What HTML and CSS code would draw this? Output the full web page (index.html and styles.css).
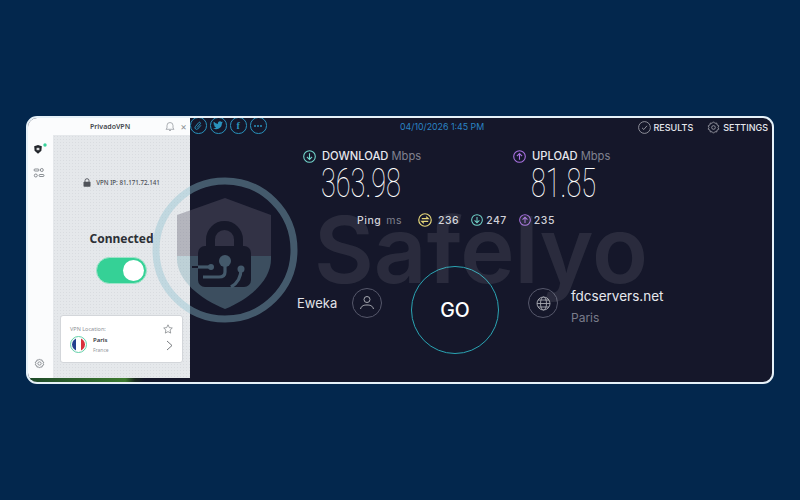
FILE: index.html
```html
<!DOCTYPE html>
<html lang="en">
<head>
    <meta charset="UTF-8">
    <title>PrivadoVPN speed test</title>
    <link rel="stylesheet" href="styles.css">
</head>
<body>
    <div class="frame">
        <div class="vpn">
            <div class="vpn-body">
                <div class="rail">
                    <svg class="rail-shield" width="16" height="14" viewBox="0 0 16 14">
                        <path d="M3.200 4.200 L7 3 L10.800 4.200 L10.400 8.800 L7 11.800 L3.600 8.800 Z" fill="#23262b"/>
                        <rect x="5.600" y="5.800" width="2.800" height="2.400" fill="#d8dadd"/>
                        <circle cx="14" cy="3" r="1.700" fill="#37d39a"/>
                    </svg>
                    <svg class="rail-sliders" width="12" height="12" viewBox="0 0 12 12" fill="none" stroke="#6f747a" stroke-width=".8">
                        <rect x="1" y="2" width="5" height="2" rx="1"/>
                        <circle cx="8.800" cy="3" r="1.500"/>
                        <circle cx="2.800" cy="8.500" r="1.500"/>
                        <rect x="6" y="7.500" width="5" height="2" rx="1"/>
                    </svg>
                    <svg class="rail-gear" width="11" height="11" viewBox="0 0 12 12" fill="none" stroke="#6f747a" stroke-width=".8">
                        <path d="M6 1 L7.100 2.300 L8.800 2.100 L9.100 3.800 L10.700 4.500 L10 6 L10.700 7.500 L9.100 8.200 L8.800 9.900 L7.100 9.700 L6 11 L4.900 9.700 L3.200 9.900 L2.900 8.200 L1.300 7.500 L2 6 L1.300 4.500 L2.900 3.800 L3.200 2.100 L4.900 2.300 Z"/>
                        <circle cx="6" cy="6" r="1.800"/>
                    </svg>
                </div>
                <div class="vpn-main">
                    <div class="vpn-title">
                        <span class="vpn-name">PrivadoVPN</span>
                        <svg class="bell" width="10" height="11" viewBox="0 0 10 11" fill="none" stroke="#8d9196" stroke-width=".7">
                            <path d="M1 8.300 L2 7 V4.500 A3 3 0 0 1 8 4.500 V7 L9 8.300 Z M4 9.500 H6"/>
                        </svg>
                        <span class="close">×</span>
                    </div>
                    <div class="vpn-content">
                        <div class="vpn-ip">
                            <svg width="8" height="9" viewBox="0 0 8 9">
                                <path d="M2 4 V2.700 A2 2 0 0 1 6 2.700 V4" fill="none" stroke="#50545a" stroke-width=".9"/>
                                <rect x=".5" y="3.800" width="7" height="5" rx=".8" fill="#50545a"/>
                            </svg>
                            <span>VPN IP: 81.171.72.141</span>
                        </div>
                        <div class="vpn-status">Connected</div>
                        <div class="toggle"><span class="knob"></span></div>
                        <div class="loc-card">
                            <div class="loc-head">
                                <span class="loc-label">VPN Location:</span>
                                <svg width="10" height="10" viewBox="0 0 10 10" fill="none" stroke="#777b80" stroke-width=".7">
                                    <path d="M5 .8 L6.300 3.600 L9.300 4 L7.100 6 L7.700 9.100 L5 7.600 L2.300 9.100 L2.900 6 L.7 4 L3.700 3.600 Z"/>
                                </svg>
                            </div>
                            <div class="loc-row">
                                <div class="flag"><span class="flag-in"></span></div>
                                <div class="loc-city">
                                    <div class="city">Paris</div>
                                    <div class="country">France</div>
                                </div>
                                <svg class="chev" width="7" height="11" viewBox="0 0 7 11" fill="none" stroke="#55595e" stroke-width=".8">
                                    <path d="M1 1 L6 5.500 L1 10"/>
                                </svg>
                            </div>
                        </div>
                    </div>
                </div>
            </div>
            <div class="wallpaper"></div>
        </div>

        <div class="speed">
            <div class="top">
                <div class="shares">
                    <span class="share">
                        <svg width="10" height="10" viewBox="0 0 10 10" fill="none" stroke="#2a93bd" stroke-width="1">
                            <path d="M4 6.500 L7.300 2.800 A1 1 0 0 0 5.800 1.500 L2.200 5.800 A1.700 1.700 0 0 0 4.700 8 L8 4.300"/>
                        </svg>
                    </span>
                    <span class="share">
                        <svg width="10" height="9" viewBox="0 0 10 9">
                            <path d="M10 1.300 L8.800 1.700 L9.700 .6 L8.500 1.100 A2 2 0 0 0 5 2.900 A5.700 5.700 0 0 1 .9 .8 A2 2 0 0 0 1.500 3.500 L.6 3.200 A2 2 0 0 0 2.200 5.100 L1.300 5.100 A2 2 0 0 0 3.100 6.500 A4 4 0 0 1 0 7.300 A5.700 5.700 0 0 0 8.900 2.500 Z" fill="#2a93bd"/>
                        </svg>
                    </span>
                    <span class="share share-f">f</span>
                    <span class="share share-more"><i></i><i></i><i></i></span>
                </div>
                <span class="date">04/10/2026 1:45 PM</span>
                <div class="links">
                    <span class="link">
                        <svg width="13" height="13" viewBox="0 0 13 13" fill="none" stroke="#a9abb4" stroke-width=".8">
                            <circle cx="6.500" cy="6.500" r="5.900"/>
                            <path d="M4 6.800 L5.800 8.500 L9 4.800"/>
                        </svg>
                        RESULTS
                    </span>
                    <span class="link">
                        <svg width="13" height="13" viewBox="0 0 12 12" fill="none" stroke="#a9abb4" stroke-width=".7">
                            <path d="M6 .7 L7.200 2.100 L9 1.900 L9.300 3.700 L11 4.500 L10.200 6 L11 7.500 L9.300 8.300 L9 10.100 L7.200 9.900 L6 11.300 L4.800 9.900 L3 10.100 L2.700 8.300 L1 7.500 L1.800 6 L1 4.500 L2.700 3.700 L3 1.900 L4.800 2.100 Z"/>
                            <circle cx="6" cy="6" r="1.700"/>
                        </svg>
                        SETTINGS
                    </span>
                </div>
            </div>

            <div class="metrics">
                <div class="metric">
                    <div class="metric-label">
                        <svg class="ic-down" width="13" height="13" viewBox="0 0 13 13" fill="none" stroke-width="1.100">
                            <circle cx="6.500" cy="6.500" r="5.800"/>
                            <path d="M6.500 3.200 V9.500 M3.900 6.900 L6.500 9.500 L9.100 6.900"/>
                        </svg>
                        <span>DOWNLOAD</span> <em>Mbps</em>
                    </div>
                    <div class="metric-value">363.98</div>
                </div>
                <div class="metric">
                    <div class="metric-label">
                        <svg class="ic-up" width="13" height="13" viewBox="0 0 13 13" fill="none" stroke-width="1.100">
                            <circle cx="6.500" cy="6.500" r="5.800"/>
                            <path d="M6.500 9.800 V3.500 M3.900 6.100 L6.500 3.500 L9.100 6.100"/>
                        </svg>
                        <span>UPLOAD</span> <em>Mbps</em>
                    </div>
                    <div class="metric-value">81.85</div>
                </div>
            </div>

            <div class="ping">
                <span class="ping-name">Ping</span>
                <em class="ping-unit">ms</em>
                <svg class="ic-jitter" width="14" height="14" viewBox="0 0 13 13" fill="none" stroke-width="1.100">
                    <circle cx="6.500" cy="6.500" r="5.800"/>
                    <path d="M3.500 5.200 H9.500 L7.500 3.400 M9.500 7.800 H3.500 L5.500 9.600"/>
                </svg>
                <span class="ping-val">236</span>
                <svg class="ic-down ping-ic" width="12" height="12" viewBox="0 0 13 13" fill="none" stroke-width="1.100">
                    <circle cx="6.500" cy="6.500" r="5.800"/>
                    <path d="M6.500 3.200 V9.500 M3.900 6.900 L6.500 9.500 L9.100 6.900"/>
                </svg>
                <span class="ping-val">247</span>
                <svg class="ic-up ping-ic" width="12" height="12" viewBox="0 0 13 13" fill="none" stroke-width="1.100">
                    <circle cx="6.500" cy="6.500" r="5.800"/>
                    <path d="M6.500 9.800 V3.500 M3.900 6.100 L6.500 3.500 L9.100 6.100"/>
                </svg>
                <span class="ping-val">235</span>
            </div>

            <div class="test-row">
                <div class="side side-isp">
                    <span class="isp">Eweka</span>
                    <span class="ring">
                        <svg width="16" height="16" viewBox="0 0 16 16" fill="none" stroke="#a6a8b0" stroke-width="1">
                            <circle cx="8" cy="4.500" r="3"/>
                            <path d="M1.500 14 C2.500 10.500 5 10 8 10 C11 10 13.500 10.500 14.500 14"/>
                        </svg>
                    </span>
                </div>
                <div class="go">GO</div>
                <div class="side side-server">
                    <span class="ring">
                        <svg width="15" height="15" viewBox="0 0 15 15" fill="none" stroke="#a6a8b0" stroke-width=".9">
                            <circle cx="7.500" cy="7.500" r="6.500"/>
                            <ellipse cx="7.500" cy="7.500" rx="3" ry="6.500"/>
                            <path d="M1 7.500 H14 M2 4 H13 M2 11 H13"/>
                        </svg>
                    </span>
                    <div class="server">
                        <div class="server-name">fdcservers.net</div>
                        <div class="server-city">Paris</div>
                    </div>
                </div>
            </div>
        </div>

        <!-- watermark sits over both panels -->
        <div class="mark">
            <svg class="mark-logo" width="150" height="150" viewBox="0 0 150 150">
                <circle cx="75" cy="75" r="69" fill="none" stroke="#8cc0d0" stroke-opacity=".4" stroke-width="7"/>
                <path d="M27 40 L75 23 L121 40 V81 H27 Z" fill="#625f73" fill-opacity=".375"/>
                <path d="M27 81 H121 V84 C121 105 100 124 75 134 C50 124 27 105 27 84 Z" fill="#7daab7" fill-opacity=".375"/>
                <path d="M60.500 72 V64.500 A14 14 0 0 1 88.500 64.500 V72" fill="none" stroke="#161829" stroke-width="9"/>
                <rect x="48" y="71" width="53" height="41" rx="7" fill="#161829"/>
                <path d="M42 92 H48" stroke="#161829" stroke-width="2"/>
                <g fill="none" stroke="#44596b" stroke-width="3.200">
                    <path d="M75 86 V97 Q75 102 69 102 H53"/>
                    <path d="M48 92 H61"/>
                    <path d="M91 94 C91 102 88 108 81 112"/>
                </g>
                <g fill="#44596b">
                    <circle cx="75" cy="86" r="6"/>
                    <circle cx="61" cy="92" r="3"/>
                    <circle cx="91" cy="94" r="3.500"/>
                </g>
            </svg>
            <span class="mark-name">Safelyo</span>
        </div>
    </div>
</body>
</html>
```

FILE: styles.css
```css
* {
    box-sizing: border-box;
}

body {
    margin: 0;
    width: 800px;
    height: 500px;
    background: #03274d;
    font-family: Inter, "Liberation Sans", sans-serif;
    overflow: hidden;
    padding: 116px 26px;
}

em {
    font-style: normal;
}

.frame {
    position: relative;
    width: 748px;
    height: 268px;
    display: flex;
    border: 2px solid #e6f1f8;
    border-radius: 11px;
    overflow: hidden;
    background: #15172a;
}

/* vpn window */

.vpn {
    width: 162px;
    display: flex;
    flex-direction: column;
    background: #fbfcfd;
}

.vpn-body {
    flex: 1;
    display: flex;
}

.wallpaper {
    height: 4px;
    background: linear-gradient(90deg, #1f4a2a, #3d7a30 60%, #1a2a20 66%, #15172a 72%);
}

.rail {
    width: 25px;
    display: flex;
    flex-direction: column;
    align-items: center;
    padding-top: 24px;
    padding-right: 3px;
}

.rail-sliders {
    margin-top: 11px;
}

.rail-gear {
    margin-top: auto;
    margin-bottom: 9px;
}

.vpn-main {
    flex: 1;
    display: flex;
    flex-direction: column;
    min-width: 0;
}

.vpn-title {
    height: 17px;
    display: flex;
    align-items: center;
    padding-left: 37px;
    padding-bottom: 1px;
    color: #44484d;
}

.vpn-name {
    font-size: 7px;
    font-weight: 600;
    font-family: "Noto Sans", sans-serif;
}

.bell {
    margin-left: 35px;
}

.close {
    margin-left: 5px;
    font-size: 10px;
    color: #8d9196;
}

.vpn-content {
    flex: 1;
    display: flex;
    flex-direction: column;
    align-items: center;
    background-color: #e5e8eb;
    background-image: radial-gradient(#d9dce0 .6px, transparent .7px);
    background-size: 3px 3px;
    font-family: "Noto Sans", sans-serif;
    padding: 0 7px;
}

.vpn-ip {
    display: flex;
    align-items: center;
    gap: 5px;
    margin-top: 42px;
    height: 10px;
    font-size: 6.200px;
    font-weight: 500;
    color: #4a4e54;
}

.vpn-status {
    margin-top: 43px;
    height: 18px;
    line-height: 18px;
    font-size: 12px;
    font-weight: 700;
    color: #2d3036;
}

.toggle {
    margin-top: 9px;
    width: 51px;
    height: 27px;
    display: flex;
    align-items: center;
    justify-content: flex-end;
    padding-right: 2px;
    border-radius: 14px;
    background: #35d196;
    border: 1.500px solid #9fe3c9;
}

.knob {
    width: 21px;
    height: 21px;
    border-radius: 50%;
    background: #fff;
}

.loc-card {
    margin-top: 31px;
    width: 123px;
    height: 48px;
    background: #fff;
    border: 1px solid #d3d6da;
    border-radius: 3px;
    padding: 8px 9px 0 9px;
}

.loc-head {
    display: flex;
    justify-content: space-between;
    align-items: center;
    font-size: 5.500px;
    color: #8d9196;
}

.loc-row {
    display: flex;
    align-items: center;
    margin-top: 1px;
}

.flag {
    width: 17px;
    height: 17px;
    border-radius: 50%;
    border: 1px solid #62cfa8;
    padding: 1px;
}

.flag-in {
    display: block;
    width: 100%;
    height: 100%;
    border-radius: 50%;
    background: linear-gradient(90deg, #24408e 33%, #fff 33%, #fff 66%, #d8303c 66%);
}

.loc-city {
    margin-left: 6px;
    margin-top: 1px;
}

.city {
    font-size: 6px;
    font-weight: 600;
    color: #34373c;
}

.country {
    margin-top: 3px;
    font-size: 5px;
    color: #93979c;
}

.chev {
    margin-left: auto;
    margin-top: 3px;
}

/* speedtest */

.speed {
    flex: 1;
    min-width: 0;
    color: #fff;
    font-family: Inter, "Liberation Sans", sans-serif;
}

.top {
    height: 18px;
    display: flex;
    align-items: center;
    padding-right: 4px;
}

.shares {
    display: flex;
    gap: 3.500px;
    margin-top: -3px;
}

.share {
    width: 16.500px;
    height: 16.500px;
    border: 1.200px solid #2a93bd;
    border-radius: 50%;
    display: flex;
    align-items: center;
    justify-content: center;
    gap: 1px;
}

.share-f {
    color: #2a93bd;
    font: 700 10px "Liberation Serif", serif;
}

.share-more i {
    width: 2px;
    height: 2px;
    border-radius: 50%;
    background: #2a93bd;
}

.date {
    margin-left: 133.500px;
    margin-top: -2px;
    font-size: 8.800px;
    color: #2a84c4;
}

.links {
    margin-left: auto;
    display: flex;
    gap: 14px;
    margin-top: 1px;
}

.link {
    display: flex;
    align-items: center;
    gap: 3px;
    font-size: 9px;
    font-weight: 500;
    color: #e7e8ee;
}

.metrics {
    display: flex;
    margin-top: 13px;
    padding-left: 113px;
}

.metric {
    width: 210px;
}

.metric-label {
    display: flex;
    align-items: center;
    gap: 3px;
    height: 14px;
    font-size: 11.200px;
    font-weight: 500;
    color: #e7e8ee;
}

.metric-label svg {
    margin-right: 3px;
}

.metric-label em {
    color: #80828f;
    font-weight: 400;
}

.metric-value {
    margin-left: 18px;
    height: 36px;
    line-height: 40px;
    font-family: Roboto, sans-serif;
    font-weight: 100;
    font-size: 41px;
    white-space: nowrap;
    transform: scaleX(.66);
    transform-origin: left center;
}

.ic-down {
    stroke: #72d5cb;
}

.ic-up {
    stroke: #a871e0;
}

.ic-jitter {
    stroke: #e6d77a;
    margin: 0 6px 0 16px;
}

.ping {
    display: flex;
    align-items: center;
    height: 14px;
    margin-top: 14px;
    padding-left: 167px;
    font-size: 10.500px;
    font-weight: 500;
    letter-spacing: .5px;
    color: #d0d1d8;
}

.ping-unit {
    margin-left: 5px;
    color: #80828f;
    font-weight: 400;
}

.ping-ic {
    margin: 0 3px 0 12px;
}

.test-row {
    display: flex;
    align-items: flex-start;
    margin-top: 39px;
    padding-left: 107px;
}

.side {
    display: flex;
    align-items: center;
    margin-top: 22px;
}

.side-isp {
    width: 85px;
}

.isp {
    width: 55px;
    font-size: 13px;
    color: #e1e2e8;
}

.ring {
    width: 30px;
    height: 30px;
    flex: none;
    border: 1.200px solid #55576a;
    border-radius: 50%;
    display: flex;
    align-items: center;
    justify-content: center;
}

.go {
    width: 88px;
    height: 88px;
    margin-left: 29px;
    border: 1.500px solid #2aa4b3;
    border-radius: 50%;
    display: flex;
    align-items: center;
    justify-content: center;
    font-size: 19.500px;
    font-weight: 500;
}

.side-server {
    margin-left: 29px;
    align-items: flex-start;
}

.server {
    margin-left: 13px;
    margin-top: -1px;
}

.server-name {
    font-size: 13.500px;
    color: #e7e8ee;
    line-height: 18px;
}

.server-city {
    margin-top: 5px;
    font-size: 12px;
    line-height: 16px;
    color: #7a7c8a;
}

/* watermark */

.mark {
    position: absolute;
    left: 122px;
    top: 57px;
    display: flex;
    align-items: flex-start;
    pointer-events: none;
}

.mark-logo {
    flex: none;
}

.mark-name {
    margin-left: 14px;
    margin-top: 35px;
    font-family: Inter, sans-serif;
    font-size: 92px;
    line-height: 80px;
    font-weight: 600;
    color: rgba(255, 255, 255, .09);
}
```
